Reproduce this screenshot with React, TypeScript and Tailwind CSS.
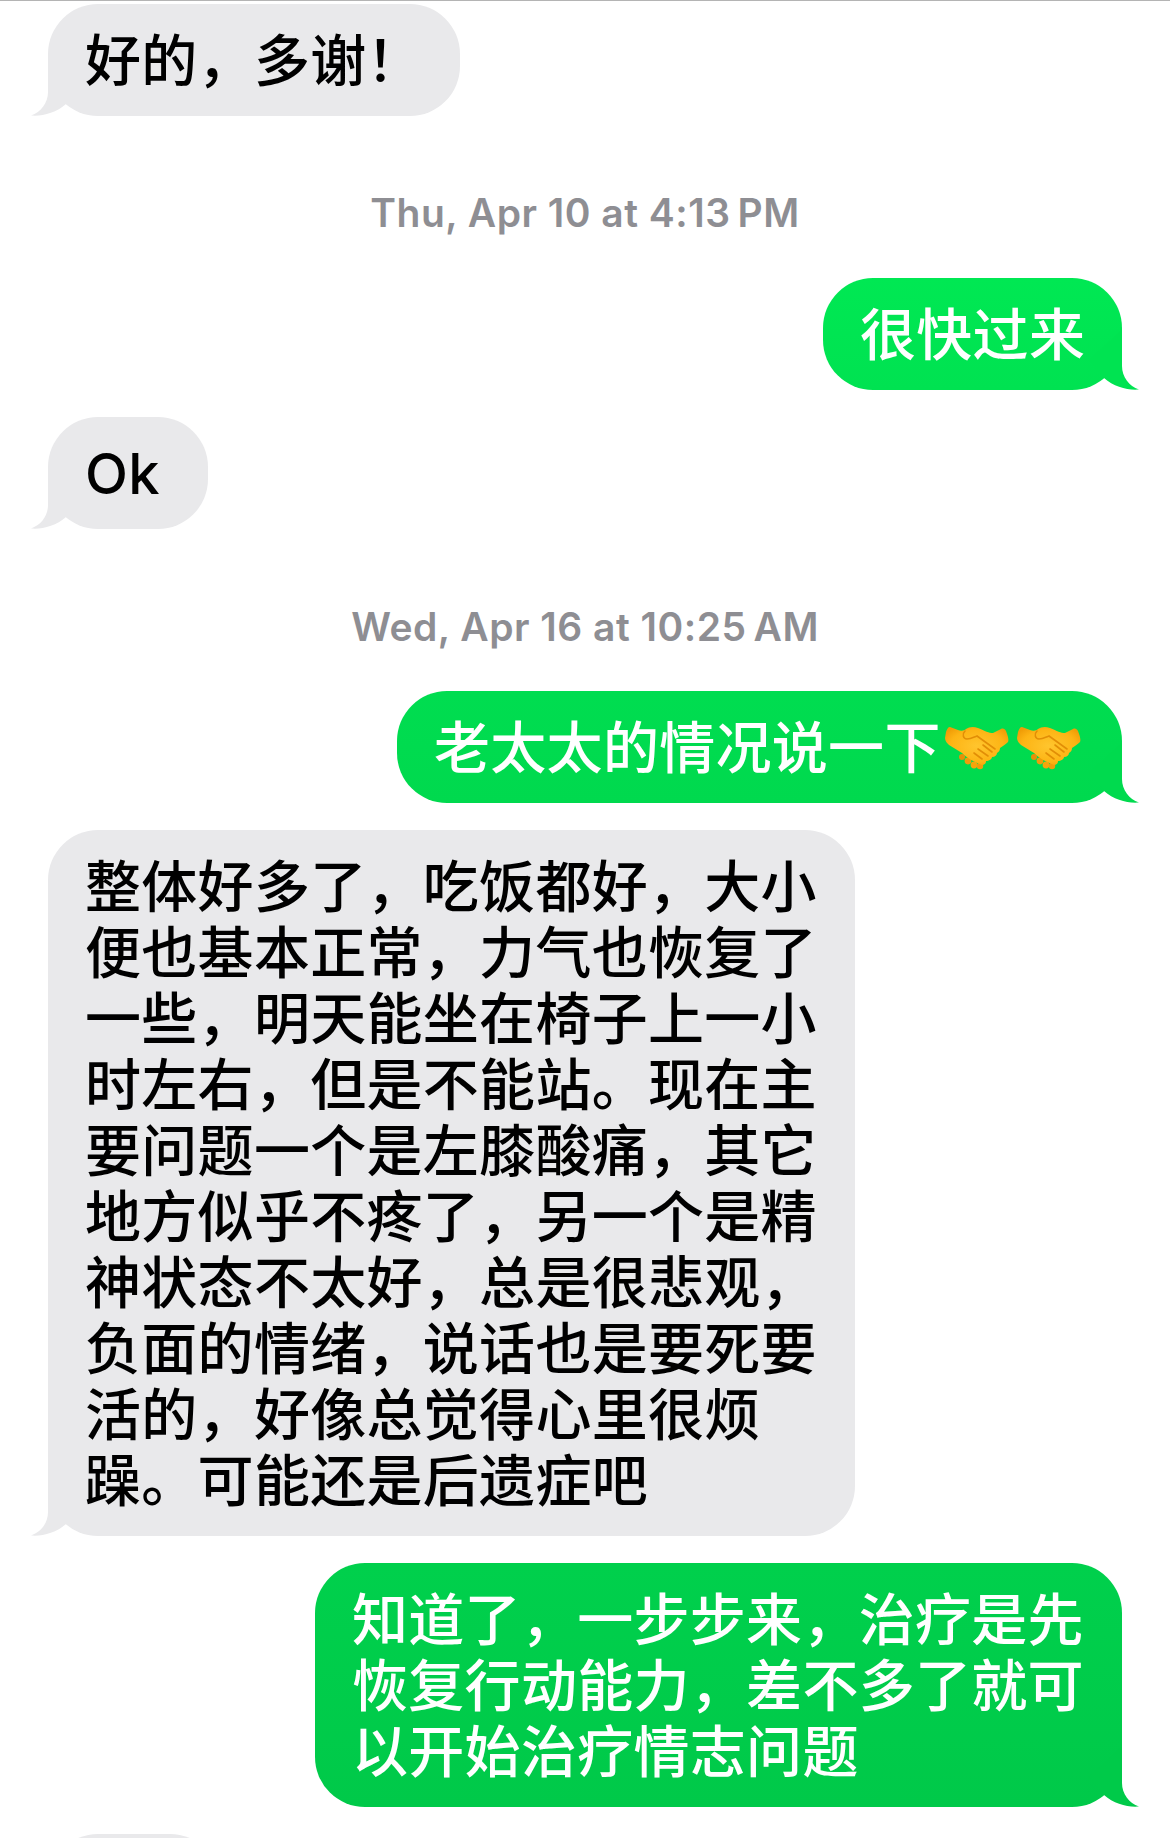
const cjk = "font-['Inter','Noto_Sans_CJK_SC',sans-serif]";

type BubbleProps = {
  lines: string[];
  mine?: boolean;
  bg?: string;
  tail?: string;
  className?: string;
  children?: React.ReactNode;
};

const Tail = ({ fill, mine }: { fill: string; mine?: boolean }) => (
  <svg
    viewBox="0 0 60 60"
    className={
      mine
        ? "absolute right-[-17px] bottom-0 w-[60px] h-[60px]"
        : "absolute left-[-17px] bottom-0 w-[60px] h-[60px] -scale-x-100"
    }
  >
    <path d="M43 0 L43 36 C43 47 50 56 60 59.5 C49 60.5 35 57 25 48 L10 30 Z" fill={fill} />
  </svg>
);

const Bubble = ({ lines, mine, bg, tail, className, children }: BubbleProps) => (
  <div
    className={`relative rounded-[50px] px-[37px] pt-[24px] pb-[22px] text-[56px] leading-[66px] tracking-[0.3px] font-medium whitespace-nowrap ${cjk} ${
      mine ? "self-end mr-[48px] text-white" : "self-start ml-[48px] text-black bg-[#e9e9eb]"
    } ${bg ?? ""} ${className ?? ""}`}
  >
    <Tail fill={tail ?? "#e9e9eb"} mine={mine} />
    <div className="relative">
      {lines.map((line) => (
        <div key={line} className="flex items-center">
          {line}
          {children}
        </div>
      ))}
    </div>
  </div>
);

const Time = ({ children, className }: { children: string; className: string }) => (
  <div className={`text-center text-[39px] leading-[44px] tracking-[0.5px] font-semibold text-[#8e8e93] font-['Inter',sans-serif] ${className}`}>
    {children}
  </div>
);

const Handshake = ({ id }: { id: string }) => (
  <svg viewBox="0 0 64 44" className="w-[64px] h-[44px] shrink-0">
    <defs>
      <radialGradient id={id} cx="0.5" cy="0.5" r="0.6">
        <stop offset="0" stopColor="#ffc52e" />
        <stop offset="0.7" stopColor="#fdb414" />
        <stop offset="1" stopColor="#f09c06" />
      </radialGradient>
    </defs>
    {/* fingers of the lower hand */}
    <circle cx="17" cy="31" r="3" fill="#e88f08" />
    <circle cx="23" cy="35" r="3.4" fill="#f09c0a" />
    <circle cx="29" cy="39" r="3.4" fill="#f5a40c" />
    <circle cx="35" cy="40" r="3.2" fill="#f09c0a" />
    <path
      d="M5 1 C3 1 2 3 1 6 L0 12 C0 15 2 17 4 19 L17 27 C20 30 24 33 30 36 L37 39 C40 39 41 37 41 35 C44 35 47 33 47 31 C50 31 52 29 52 27 C54 26 55 24 55 22 C58 20 61 18 63 16 C64 14 63 10 61 5 C60 3 58 2 56 3 L48 7 C44 7 40 5 33 2 C28 0 24 1 21 3 C19 5 16 5 13 4 Z"
      fill={`url(#${id})`}
    />
    <path d="M20 5 C17 8 18 13 22 13 C26 13 29 11 32 10 L50 23" fill="none" stroke="#e28e06" strokeWidth="1.6" strokeLinecap="round" />
    <path d="M38 19 L47 26 M33 23 L43 30 M29 27 L37 33" fill="none" stroke="#e28e06" strokeWidth="1.6" strokeLinecap="round" />
  </svg>
);

export default function App() {
  return (
    <div className="relative w-[1170px] h-[1838px] overflow-hidden bg-white flex flex-col">
      <div className="h-[1px] bg-[#b4b4b4] shrink-0" />
      <Bubble lines={["好的，多谢！"]} className="mt-[3px] w-[412px] shrink-0" />
      <Time className="mt-[75px]">{"Thu, Apr 10 at 4:13\u202fPM"}</Time>
      <Bubble
        mine
        lines={["很快过来"]}
        bg="bg-linear-to-b from-[#00e853] to-[#00e251]"
        tail="#00e351"
        className="mt-[43px] w-[299px] shrink-0"
      />
      <Bubble lines={["Ok"]} className="mt-[27px] w-[160px] shrink-0" />
      <Time className="mt-[76px]">{"Wed, Apr 16 at 10:25\u202fAM"}</Time>
      <Bubble
        mine
        lines={["老太太的情况说一下"]}
        bg="bg-linear-to-b from-[#00dd50] to-[#00d94e]"
        tail="#00da4e"
        className="mt-[42px] w-[725px] shrink-0"
      >
        <span className="flex gap-[8px] ml-[4px]">
          <Handshake id="hand-a" />
          <Handshake id="hand-b" />
        </span>
      </Bubble>
      <Bubble
        lines={[
          "整体好多了，吃饭都好，大小",
          "便也基本正常，力气也恢复了",
          "一些，明天能坐在椅子上一小",
          "时左右，但是不能站。现在主",
          "要问题一个是左膝酸痛，其它",
          "地方似乎不疼了，另一个是精",
          "神状态不太好，总是很悲观，",
          "负面的情绪，说话也是要死要",
          "活的，好像总觉得心里很烦",
          "躁。可能还是后遗症吧",
        ]}
        className="mt-[27px] w-[807px] shrink-0"
      />
      <Bubble
        mine
        lines={["知道了，一步步来，治疗是先", "恢复行动能力，差不多了就可", "以开始治疗情志问题"]}
        bg="bg-linear-to-b from-[#00d04c] to-[#00c949]"
        tail="#00ca49"
        className="mt-[27px] w-[807px] shrink-0"
      />
      <div className="mt-[27px] ml-[48px] w-[172px] h-[112px] shrink-0 rounded-[50px] bg-[#e9e9eb]" />
    </div>
  );
}
